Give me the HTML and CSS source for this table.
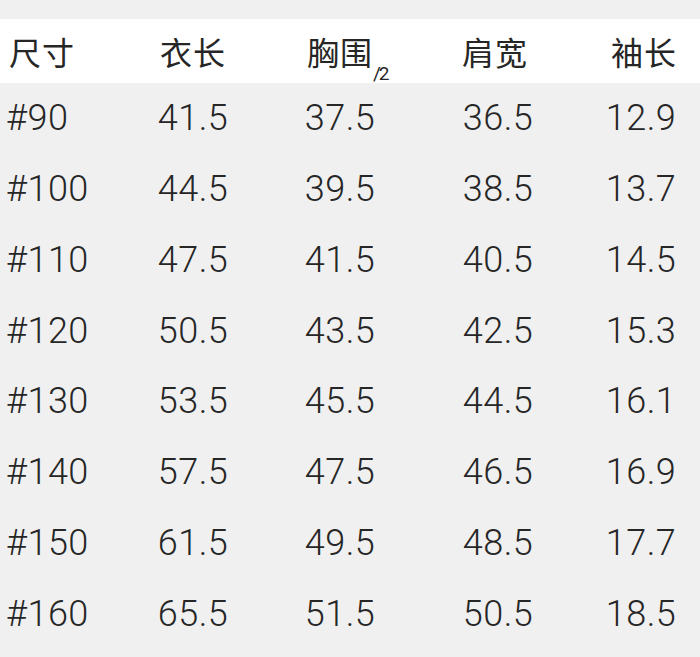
FILE: index.html
```html
<!DOCTYPE html>
<html lang="zh">
<head>
<meta charset="utf-8">
<link rel="stylesheet" href="styles.css">
</head>
<body>
<div class="page">
  <div class="row head">
    <div class="c first">尺寸</div>
    <div class="c">衣长</div>
    <div class="c"><span class="lbl">胸围<span class="half">/2</span></span></div>
    <div class="c">肩宽</div>
    <div class="c">袖长</div>
  </div>
  <div class="row"><div class="c first">#90</div><div class="c">41.5</div><div class="c">37.5</div><div class="c">36.5</div><div class="c">12.9</div></div>
  <div class="row"><div class="c first">#100</div><div class="c">44.5</div><div class="c">39.5</div><div class="c">38.5</div><div class="c">13.7</div></div>
  <div class="row"><div class="c first">#110</div><div class="c">47.5</div><div class="c">41.5</div><div class="c">40.5</div><div class="c">14.5</div></div>
  <div class="row"><div class="c first">#120</div><div class="c">50.5</div><div class="c">43.5</div><div class="c">42.5</div><div class="c">15.3</div></div>
  <div class="row"><div class="c first">#130</div><div class="c">53.5</div><div class="c">45.5</div><div class="c">44.5</div><div class="c">16.1</div></div>
  <div class="row"><div class="c first">#140</div><div class="c">57.5</div><div class="c">47.5</div><div class="c">46.5</div><div class="c">16.9</div></div>
  <div class="row"><div class="c first">#150</div><div class="c">61.5</div><div class="c">49.5</div><div class="c">48.5</div><div class="c">17.7</div></div>
  <div class="row"><div class="c first">#160</div><div class="c">65.5</div><div class="c">51.5</div><div class="c">50.5</div><div class="c">18.5</div></div>
</div>
</body>
</html>
```
FILE: styles.css
```css
html, body {
  margin: 0;
  padding: 0;
  background: #f0f0f0;
}
.page {
  width: 700px;
  height: 657px;
  padding-top: 19px;
  box-sizing: border-box;
  color: #262626;
  font-family: Roboto, "Noto Sans CJK SC", sans-serif;
  overflow: hidden;
}
.row {
  display: grid;
  grid-template-columns: 120px 146px 148px 168px 118px;
  height: 70.75px;
  align-items: center;
  font-size: 36px;
  font-weight: 300;
  letter-spacing: 0.5px;
}
.row.head {
  height: 64px;
  background: #ffffff;
  font-family: "Noto Sans CJK SC", sans-serif;
  font-size: 32px;
  font-weight: 400;
  letter-spacing: 1px;
}
.c {
  text-align: center;
  line-height: 1;
}
.c.first {
  text-align: left;
  padding-left: 6px;
}
.head .c.first {
  padding-left: 9px;
}
.head .c:nth-child(4) {
  padding-right: 6px;
}
.head .c:nth-child(5) {
  padding-left: 6px;
}
.lbl {
  position: relative;
}
.half {
  position: absolute;
  left: 100%;
  bottom: -9px;
  font-family: Roboto, sans-serif;
  font-weight: 400;
  font-size: 19px;
  letter-spacing: -2px;
}
```
